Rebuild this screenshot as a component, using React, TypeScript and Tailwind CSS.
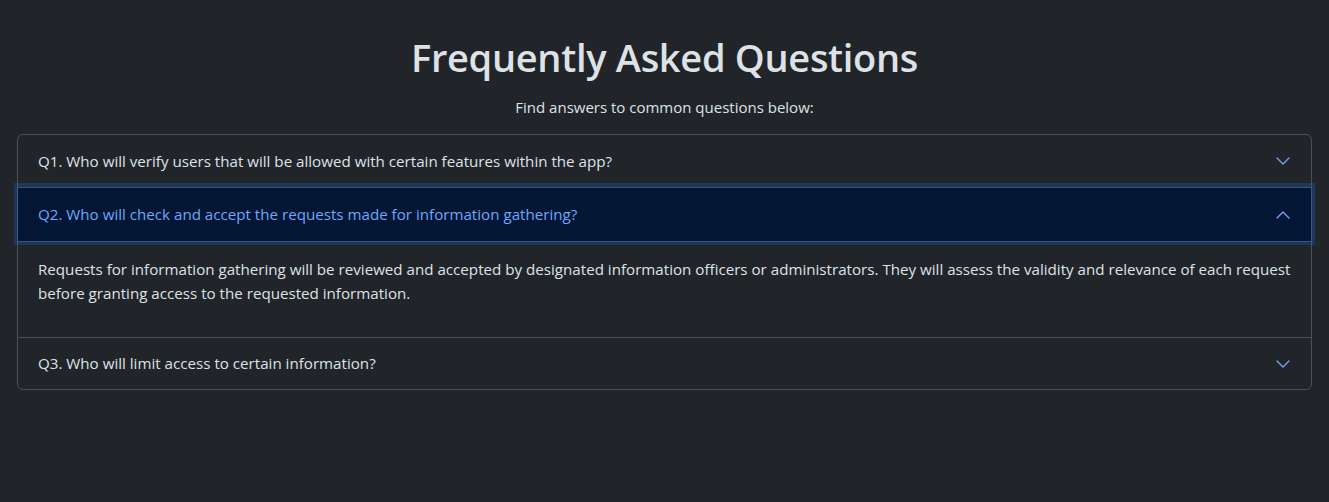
import React from "react";

const Chevron = ({ up }: { up?: boolean }) => (
  <svg width="16" height="16" viewBox="0 0 16 16" fill="none" stroke="#6ea8fe" strokeWidth="1.3" strokeLinecap="round" strokeLinejoin="round" className={up ? "rotate-180" : ""}>
    <path d="M2 5L8 11L14 5" />
  </svg>
);

export default function App() {
  return (
    <div className="min-h-[502px] w-full bg-[#212529] text-[#dee2e6] font-['Open_Sans',sans-serif]">
      <div className="px-[17px] pt-[28px]">
        <h1 className="text-center text-[38px] leading-[58px] font-semibold tracking-[-0.3px]">Frequently Asked Questions</h1>
        <p className="mt-[9px] text-center text-[15px] leading-[24px]">Find answers to common questions below:</p>
        <div className="mt-[15px] rounded-[6px] border border-[#495057]">
          <div className="flex h-[52px] items-center justify-between px-[20px] text-[15.15px]">
            <span>Q1. Who will verify users that will be allowed with certain features within the app?</span>
            <Chevron />
          </div>
          <div className="relative z-10 flex h-[54px] items-center justify-between border-t border-[#495057] bg-[#031633] px-[20px] text-[15.15px] text-[#6ea8fe] shadow-[0_0_0_4px_rgba(13,110,253,0.25)]">
            <span>Q2. Who will check and accept the requests made for information gathering?</span>
            <Chevron up />
          </div>
          <div className="border-t border-[#495057] px-[20px] pt-[15px] pb-[32px] text-[15.15px] leading-[24px]">
            Requests for information gathering will be reviewed and accepted by designated information officers or administrators. They will assess the validity and relevance of each request before granting access to the requested information.
          </div>
          <div className="flex h-[52px] items-center justify-between border-t border-[#495057] px-[20px] text-[15.15px]">
            <span>Q3. Who will limit access to certain information?</span>
            <Chevron />
          </div>
        </div>
      </div>
    </div>
  );
}
